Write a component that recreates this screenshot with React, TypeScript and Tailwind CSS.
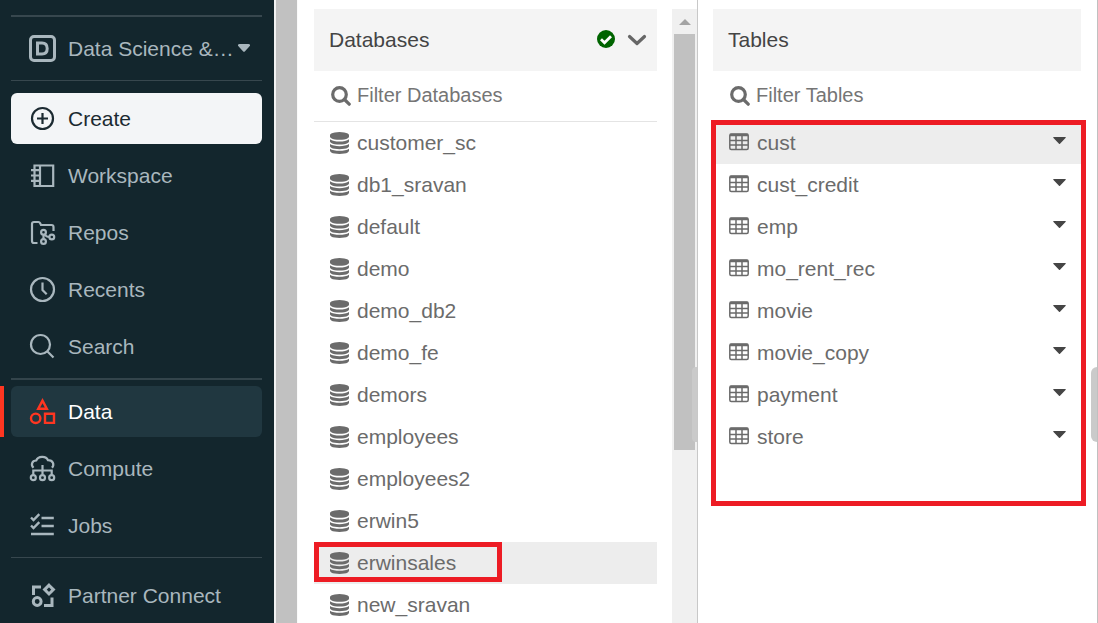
import React, { useState } from "react";

type IconProps = { children: React.ReactNode };

function NavIcon({ children }: IconProps) {
  return (
    <svg viewBox="0 0 28 28" className="size-7 shrink-0" fill="none" stroke="currentColor" strokeWidth="2.2" aria-hidden="true">
      {children}
    </svg>
  );
}

const icons = {
  persona: (
    <>
      <rect x="2.5" y="1.5" width="24" height="24" rx="3.5" strokeWidth="3" />
      <path d="M9.500 8h4.500c3.400 0 5.200 2.200 5.200 5.500s-1.800 5.500-5.200 5.500H9.500z" strokeWidth="3" />
    </>
  ),
  create: (
    <>
      <circle cx="14.500" cy="13.500" r="10.500" />
      <path d="M14.500 8v11M9 13.500h11" />
    </>
  ),
  workspace: (
    <>
      <path d="M6.500 3.500h18.700v20.500H6.500zM12 3.500v20.500" />
      <path d="M3 8.200h8M3 13.500h8M3 18.800h8" />
    </>
  ),
  repos: (
    <>
      <path d="M9.500 24H6a2 2 0 0 1-2-2V5a2 2 0 0 1 2-2h4.500q1 0 1.500 1l1 2h10.500a2 2 0 0 1 2 2V12" />
      <circle cx="15.500" cy="13.300" r="2.400" />
      <circle cx="15.500" cy="22.500" r="2.400" />
      <circle cx="23.800" cy="18" r="2.400" />
      <path d="M15.500 16v4M16.800 15.500q1.500 2.500 4.500 2.500" />
    </>
  ),
  recents: (
    <>
      <circle cx="14.500" cy="13.500" r="11.500" />
      <path d="M14.500 6.500v7.500l4.200 4.200" />
    </>
  ),
  search: (
    <>
      <circle cx="12.500" cy="11.500" r="9.500" />
      <path d="m19 18 6.500 6.500" />
    </>
  ),
  data: (
    <>
      <path d="M14.500 2.600 18.800 10.700H10.200z" strokeWidth="2.400" />
      <circle cx="7.700" cy="20.300" r="4.700" strokeWidth="2.400" />
      <path d="M17 15.700h9v9.200h-9z" strokeWidth="2.400" />
    </>
  ),
  compute: (
    <>
      <path d="M5.500 12.800c-3-3-1.500-7.300 2.700-7.300C10 1 18 .5 20 5.200c5 0 6.700 4.500 4 7.600" />
      <path d="M14.500 10v9.500M5.300 20v-4.500h18.400V20" />
      <circle cx="5.300" cy="22.700" r="2.500" />
      <circle cx="14.500" cy="22.700" r="2.500" />
      <circle cx="23.700" cy="22.700" r="2.500" />
    </>
  ),
  jobs: (
    <path d="m3 5.500 2.500 2.500L11.300 2.200M3 13.500l2.500 2.500 5.800-5.800M13.500 6h12.300M13.500 14h12.300M3 22h22.800" strokeWidth="2.400" />
  ),
  partner: (
    <>
      <path d="M5.500 13V5H13M24 15.500v8h-8" strokeWidth="3" />
      <path d="m21 3.200 4.400 4.400-4.400 4.400-4.400-4.400z" strokeWidth="3" />
      <circle cx="9.200" cy="19.500" r="3.900" strokeWidth="3" />
    </>
  ),
};

function SearchIcon() {
  return (
    <svg viewBox="0 0 20 20" className="size-5 shrink-0" fill="none" stroke="#6b6b6b" strokeWidth="3.200" aria-hidden="true">
      <circle cx="8.500" cy="8.500" r="6.800" />
      <path d="m13.500 13.500 4.700 4.700" strokeLinecap="round" />
    </svg>
  );
}

function DatabaseIcon() {
  return (
    <svg viewBox="0 0 1536 1792" preserveAspectRatio="none" className="h-[22px] w-[19px] shrink-0" fill="#6b6b6b" aria-hidden="true">
      <path d="M768 768q237 0 443-43t325-127v170q0 69-103 128t-280 93.500-385 34.500-385-34.500-280-93.500-103-128v-170q119 84 325 127t443 43zm0 768q237 0 443-43t325-127v170q0 69-103 128t-280 93.500-385 34.500-385-34.500-280-93.500-103-128v-170q119 84 325 127t443 43zm0-384q237 0 443-43t325-127v170q0 69-103 128t-280 93.500-385 34.500-385-34.500-280-93.500-103-128v-170q119 84 325 127t443 43zm0-1152q208 0 385 34.500t280 93.500 103 128v128q0 69-103 128t-280 93.500-385 34.500-385-34.500-280-93.500-103-128v-128q0-69 103-128t280-93.500 385-34.500z" />
    </svg>
  );
}

function TableIcon() {
  return (
    <svg viewBox="0 0 20 20" className="size-5 shrink-0" fill="none" stroke="#6b6b6b" strokeWidth="1.500" aria-hidden="true">
      <rect x="0.800" y="1" width="18.400" height="15.500" rx="1.500" />
      <path d="M1 2h18" strokeWidth="2.500" />
      <path d="M1 7.500h18M1 12h18M7 3v13.500M13 3v13.500" />
    </svg>
  );
}

type NavItem = { label: string; icon: React.ReactNode };

const mainNav: NavItem[] = [
  { label: "Workspace", icon: icons.workspace },
  { label: "Repos", icon: icons.repos },
  { label: "Recents", icon: icons.recents },
  { label: "Search", icon: icons.search },
];

const dataNav: NavItem[] = [
  { label: "Data", icon: icons.data },
  { label: "Compute", icon: icons.compute },
  { label: "Jobs", icon: icons.jobs },
];

function NavLink({ item, active = false }: { item: NavItem; active?: boolean }) {
  return (
    <div className="relative">
      {active && <span className="absolute inset-y-0 -left-[11px] w-1 bg-[#ff3621]" />}
      <a
        href="#"
        aria-current={active ? "page" : undefined}
        className={
          active
            ? "flex h-[51px] items-center gap-3 rounded-md bg-[#203740] px-[17px] text-white"
            : "flex h-[51px] items-center gap-3 rounded-md px-[17px] text-[#a9b7be]"
        }
      >
        <span className={active ? "text-[#ff3621]" : "text-[#a9b7be]"}>
          <NavIcon>{item.icon}</NavIcon>
        </span>
        {item.label}
      </a>
    </div>
  );
}

function Sidebar() {
  return (
    <nav className="w-[274px] shrink-0 bg-[#13262d] pt-[15px] pr-3 pl-[11px] text-[21px] text-[#a9b7be]">
      <button type="button" className="flex h-[66px] w-full items-center border-t-2 border-b border-t-[#37474e] border-b-[#37474e] pr-3 pl-[17px]">
        <NavIcon>{icons.persona}</NavIcon>
        <span className="ml-3 whitespace-nowrap">Data Science &amp;…</span>
        <svg viewBox="0 0 12 8" className="mb-0.5 ml-auto h-2 w-3 shrink-0" fill="currentColor" aria-hidden="true">
          <path d="M1.500 0h9q1.500 0 1.500 1.200v.6L6.800 7.500q-.8.700-1.600 0L0 1.800v-.6Q0 0 1.500 0z" />
        </svg>
      </button>
      <button type="button" className="mt-3 flex h-[51px] w-full items-center gap-3 rounded-md bg-[#f3f5f7] px-[17px] text-[#1b2a31]">
        <NavIcon>{icons.create}</NavIcon>
        Create
      </button>
      <div className="mt-1.5 flex flex-col gap-1.5 border-b-2 border-[#33444b] pb-1.5">
        {mainNav.map((item) => (
          <NavLink key={item.label} item={item} />
        ))}
      </div>
      <div className="mt-1.5 flex flex-col gap-1.5 border-b border-[#37474e] pb-1.5">
        {dataNav.map((item) => (
          <NavLink key={item.label} item={item} active={item.label === "Data"} />
        ))}
      </div>
      <div className="mt-3">
        <NavLink item={{ label: "Partner Connect", icon: icons.partner }} />
      </div>
    </nav>
  );
}

function FilterBox({ id, label }: { id: string; label: string }) {
  const [value, setValue] = useState("");
  return (
    <div className="flex h-[51px] items-center gap-1.5 border-b border-[#e4e4e4] pl-[17px]">
      <label htmlFor={id} aria-label={label}>
        <SearchIcon />
      </label>
      <input
        id={id}
        type="text"
        value={value}
        onChange={(e) => setValue(e.target.value)}
        placeholder={label}
        className="mb-0.5 min-w-0 flex-1 bg-transparent text-xl outline-none placeholder:text-[#757575]"
      />
    </div>
  );
}

const databases = [
  "customer_sc",
  "db1_sravan",
  "default",
  "demo",
  "demo_db2",
  "demo_fe",
  "demors",
  "employees",
  "employees2",
  "erwin5",
  "erwinsales",
  "new_sravan",
];

function DatabasesPanel() {
  return (
    <section className="relative flex min-w-0 gap-[15px] border-r border-[#c8c8c8] pt-[9px] pl-4">
      <div className="min-w-0 flex-1">
        <header className="flex h-[62px] items-center bg-[#f4f4f4] pr-2.5 pl-[15px]">
          <h2 className="flex-1 text-[21px] text-[#444]">Databases</h2>
          <svg viewBox="0 0 18 18" className="mb-0.5 size-[18px]" aria-hidden="true">
            <circle cx="9" cy="9" r="9" fill="#006400" />
            <path d="m4 9.300 3.500 3.500 6.500-6.500" fill="none" stroke="#fff" strokeWidth="2.800" />
          </svg>
          <button type="button" aria-label="Collapse databases" className="ml-3">
            <svg viewBox="0 0 20 12" className="h-3 w-5" fill="none" stroke="#666" strokeWidth="3.200" strokeLinecap="round" strokeLinejoin="round" aria-hidden="true">
              <path d="m2.500 2.500 7.500 7 7.500-7" />
            </svg>
          </button>
        </header>
        <FilterBox id="filter-databases" label="Filter Databases" />
        <ul>
          {databases.map((name) => (
            <li key={name} className="relative">
              <a
                href="#"
                className={
                  name === "erwinsales"
                    ? "flex h-[42px] items-center gap-2 bg-[#ededed] pl-4"
                    : "flex h-[42px] items-center gap-2 pl-4"
                }
              >
                <DatabaseIcon />
                {name}
              </a>
              {name === "erwinsales" && (
                <span className="pointer-events-none absolute top-0 left-0 h-10 w-[188px] border-5 border-[#ed1c24]" />
              )}
            </li>
          ))}
        </ul>
      </div>
      <div className="flex w-[25px] shrink-0 flex-col bg-[#f0f0f0] px-0.5">
        <div className="flex h-[25px] shrink-0 items-center justify-center">
          <svg viewBox="0 0 12 6" className="h-1.5 w-3" fill="#a3a3a3" aria-hidden="true">
            <path d="M0 6 6 0l6 6z" />
          </svg>
        </div>
        <div className="h-[67.500%] bg-[#c1c1c1]" />
      </div>
      <span className="absolute top-[367px] right-0 h-[75px] w-[5px] rounded-l bg-[#cacaca]" />
    </section>
  );
}

const tables = ["cust", "cust_credit", "emp", "mo_rent_rec", "movie", "movie_copy", "payment", "store"];

function TablesPanel() {
  return (
    <section className="relative min-w-0 border-r border-[#c0c0c0] pt-[9px] pr-4 pl-[15px]">
      <header className="flex h-[62px] items-center bg-[#f4f4f4] pl-[15px]">
        <h2 className="text-[21px] text-[#444]">Tables</h2>
      </header>
      <FilterBox id="filter-tables" label="Filter Tables" />
      <div className="relative pb-[42px]">
        <ul>
          {tables.map((name) => (
            <li
              key={name}
              className={
                name === "cust"
                  ? "flex h-[42px] items-center bg-[#ededed] pr-[15px] pl-4"
                  : "flex h-[42px] items-center pr-[15px] pl-4"
              }
            >
              <a href="#" className="flex flex-1 items-center gap-2">
                <TableIcon />
                {name}
              </a>
              <button type="button" aria-label={`Options for ${name}`} className="pb-1.5">
                <svg viewBox="0 0 13 7" className="h-[7px] w-[13px]" fill="#454545" aria-hidden="true">
                  <path d="M0.500 0h12q.5.500 0 1L7 6.700q-.5.500-1 0L.5 1Q0 .5.500 0z" />
                </svg>
              </button>
            </li>
          ))}
        </ul>
        <span className="pointer-events-none absolute -top-0.5 -right-[5px] -bottom-1.5 -left-0.5 border-5 border-[#ed1c24]" />
      </div>
      <span className="absolute top-[367px] right-0 h-[75px] w-[6px] rounded-l-md bg-[#cacaca]" />
    </section>
  );
}

export default function App() {
  return (
    <div className="flex h-screen overflow-hidden bg-white font-['Liberation_Sans',Arial,sans-serif] text-[21px] text-[#6b6b6b]">
      <Sidebar />
      <div className="w-6 shrink-0 border-r border-l-2 border-r-[#fafafa] border-l-[#f2f2f2] bg-[#c1c1c1]" />
      <main className="grid min-w-0 flex-1 grid-cols-2">
        <DatabasesPanel />
        <TablesPanel />
      </main>
    </div>
  );
}
